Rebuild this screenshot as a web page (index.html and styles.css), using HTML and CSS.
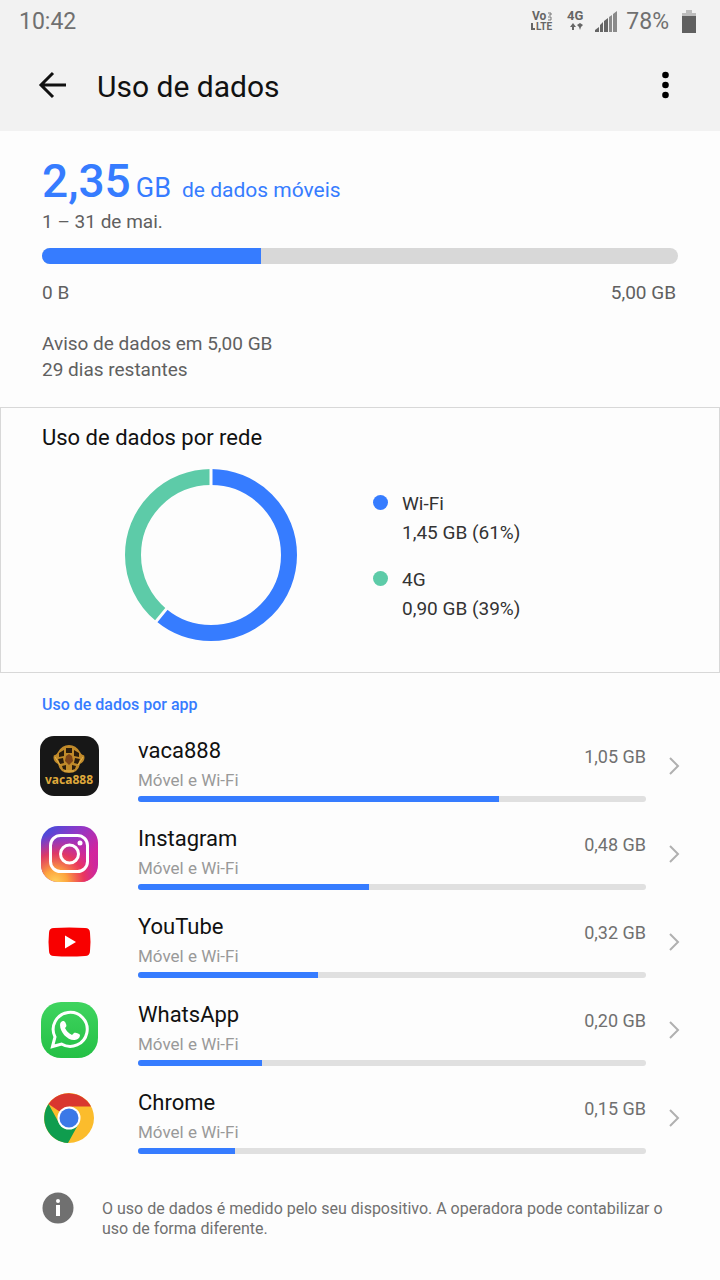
FILE: index.html
```html
<!DOCTYPE html>
<html lang="pt-BR">
<head>
  <meta charset="UTF-8" />
  <meta name="viewport" content="width=device-width, initial-scale=1.0"/>
  <title>Uso de dados</title>
  <link rel="stylesheet" href="styles.css">
</head>
<body>

  <header>
    <div class="status-bar">
      <span class="clock">10:42</span>
      <div class="status-icons">
        <svg class="volte" width="24" height="22" viewBox="0 0 24 22">
          <text x="2" y="10" font-size="12">Vo</text>
          <path d="M18 3h3v2h-2M18 7h3v3h-3" fill="none" stroke="#777" />
          <text x="6" y="20" font-size="10">LTE</text>
          <path d="M2 13v6h3" fill="none" stroke="#666" stroke-width="2" />
        </svg>
        <svg class="net" width="20" height="22" viewBox="0 0 20 22">
          <text x="1" y="10" font-size="13">4G</text>
          <path d="M4 17l3-4 3 4H8v3H6v-3zM14 20l-1-3-2-2 3-2 3 2-2 2z" />
        </svg>
        <svg class="signal" width="22" height="21" viewBox="0 0 22 21">
          <path d="M0 21v-2l4-3v5zM5 21v-7l3-3v10zM9 21V10l4-3v14z" fill="#666" />
          <path d="M14 21V6l3-2v17zM18 21V3l4-3v21z" fill="#8a8a8a" />
        </svg>
        <span class="battery-level">78%</span>
        <svg class="battery" width="16" height="23" viewBox="0 0 16 23">
          <path d="M1 3h4V0h6v3h4v4H1z" fill="#bdbdbd" />
          <path d="M1 6h14v17H1z" fill="#606060" />
        </svg>
      </div>
    </div>

    <div class="title-bar">
      <button class="icon-btn" aria-label="Voltar">
        <svg width="28" height="28" viewBox="0 0 28 28">
          <path d="M14 2L2 14l12 12M2 14h25" fill="none" stroke="#111" stroke-width="3" />
        </svg>
      </button>
      <h1>Uso de dados</h1>
      <button class="icon-btn" aria-label="Mais opções">
        <svg width="8" height="28" viewBox="0 0 8 28">
          <circle cx="3.500" cy="4" r="3.300" />
          <circle cx="3.500" cy="14" r="3.300" />
          <circle cx="3.500" cy="24" r="3.300" />
        </svg>
      </button>
    </div>
  </header>

  <main>
    <section class="usage">
      <div class="total">
        <span class="amount">2,35</span>
        <span class="unit">GB</span>
        <span class="kind">de dados móveis</span>
      </div>
      <p class="period">1 – 31 de mai.</p>
      <div class="total-bar"><div class="fill" style="width: 34.4%"></div></div>
      <div class="range">
        <span>0 B</span>
        <span>5,00 GB</span>
      </div>
      <p class="warning">Aviso de dados em 5,00 GB<br>29 dias restantes</p>
    </section>

    <section class="network">
      <h2>Uso de dados por rede</h2>
      <div class="network-body">
        <svg class="donut" width="172" height="172" viewBox="0 0 172 172">
          <g fill="none" stroke-width="16" transform="rotate(-90 86 86)">
            <circle cx="86" cy="86" r="78" pathLength="100" stroke="#367cff" stroke-dasharray="61 100" />
            <circle cx="86" cy="86" r="78" pathLength="100" stroke="#5dcba8" stroke-dasharray="39 100" stroke-dashoffset="-61" />
          </g>
          <path d="M86 0v20M43.500 137.400L30 153.800" stroke="#fdfdfd" stroke-width="3" />
        </svg>
        <ul class="legend">
          <li class="wifi">Wi-Fi<br>1,45 GB (61%)</li>
          <li class="mobile">4G<br>0,90 GB (39%)</li>
        </ul>
      </div>
    </section>

    <section class="apps">
      <h2>Uso de dados por app</h2>
      <ul>
        <li>
          <a class="app" href="#vaca888">
            <svg class="app-icon" viewBox="0 0 58 58">
              <rect y="-1" width="59" height="60" rx="14" fill="#171717" />
              <path d="M14 18q2 1 4-3 4-7 11-7t11 7q2 4 4 3 2 6-4 9-2 9-11 9t-11-9q-6-3-4-9z" fill="#c08a2a" />
              <g fill="#2a1c0c">
                <path d="M26 11h6v5h-6zM19 16l5-3v6l-5 1zM39 16l-5-3v6l5 1zM18 22l5-1 1 5-4 1zM40 22l-5-1-1 5 4 1zM22 29l4-1v5l-3-1zM36 29l-4-1v5l3-1z" />
              </g>
              <path d="M26 19l3-2 3 2 1 5-4 4-4-4z" fill="#7d4317" />
              <path d="M15 20l5 8M43 20l-5 8M24 34h10" fill="none" stroke="#e5b64c" />
              <text class="vaca-text" x="29" y="47" text-anchor="middle">vaca888</text>
            </svg>
            <div class="app-info">
              <div class="app-head">
                <div>
                  <h3>vaca888</h3>
                  <p>Móvel e Wi-Fi</p>
                </div>
                <span class="app-value">1,05 GB</span>
              </div>
              <div class="app-bar"><div class="fill" style="width: 71%"></div></div>
            </div>
            <svg class="chevron" width="12" height="20" viewBox="0 0 12 20"><path d="M2 2l8 8-8 8" /></svg>
          </a>
        </li>
        <li>
          <a class="app" href="#instagram">
            <svg class="app-icon" viewBox="0 0 58 58">
              <defs>
                <linearGradient id="ig-base" x1="0" y1="0" x2="1" y2="1">
                  <stop offset="0" stop-color="#3551df" />
                  <stop offset=".35" stop-color="#8d38c8" />
                  <stop offset=".7" stop-color="#d3249d" />
                  <stop offset="1" stop-color="#c224a8" />
                </linearGradient>
                <radialGradient id="ig-warm" cx=".25" cy="1" r=".85">
                  <stop offset="0" stop-color="#ffd15c" />
                  <stop offset=".25" stop-color="#fda43f" />
                  <stop offset=".6" stop-color="#f13a4d" stop-opacity=".8" />
                  <stop offset="1" stop-color="#d42a9a" stop-opacity="0" />
                </radialGradient>
              </defs>
              <rect x="1" y="1" width="57" height="56" rx="17" fill="url(#ig-base)" />
              <rect x="1" y="1" width="57" height="56" rx="17" fill="url(#ig-warm)" />
              <g fill="none" stroke="#fff" stroke-width="3">
                <rect x="10.500" y="10.500" width="37" height="36" rx="10" />
                <circle cx="29.500" cy="29" r="9" />
              </g>
              <circle cx="40" cy="18" r="2.500" fill="#fff" />
            </svg>
            <div class="app-info">
              <div class="app-head">
                <div>
                  <h3>Instagram</h3>
                  <p>Móvel e Wi-Fi</p>
                </div>
                <span class="app-value">0,48 GB</span>
              </div>
              <div class="app-bar"><div class="fill" style="width: 45.4%"></div></div>
            </div>
            <svg class="chevron" width="12" height="20" viewBox="0 0 12 20"><path d="M2 2l8 8-8 8" /></svg>
          </a>
        </li>
        <li>
          <a class="app" href="#youtube">
            <svg class="app-icon" viewBox="0 0 58 58">
              <path d="M14 15q15-1 31 0 5 0 5 5 1 9 0 18 0 5-5 5-16 1-31 0-5 0-5-5-1-9 0-18 0-5 5-5z" fill="#f80000" />
              <path d="M25 22.500v13l11-6.500z" fill="#fff" />
            </svg>
            <div class="app-info">
              <div class="app-head">
                <div>
                  <h3>YouTube</h3>
                  <p>Móvel e Wi-Fi</p>
                </div>
                <span class="app-value">0,32 GB</span>
              </div>
              <div class="app-bar"><div class="fill" style="width: 35.4%"></div></div>
            </div>
            <svg class="chevron" width="12" height="20" viewBox="0 0 12 20"><path d="M2 2l8 8-8 8" /></svg>
          </a>
        </li>
        <li>
          <a class="app" href="#whatsapp">
            <svg class="app-icon" viewBox="0 0 58 58">
              <defs>
                <linearGradient id="wa" x1="0" y1="0" x2="0" y2="1">
                  <stop offset="0" stop-color="#3fd45f" />
                  <stop offset="1" stop-color="#24c045" />
                </linearGradient>
              </defs>
              <rect x="1" y="1" width="57" height="56" rx="20" fill="url(#wa)" />
              <path d="M12.500 45.500l2.500-9.500a17 17 0 1 1 6.500 7z" fill="none" stroke="#fff" stroke-width="3" />
              <path d="M20 24c0-3 2-4 3-4s2 0 3 3c1 2 0 3-1 4 2 4 4 5 7 7l2-2c1-1 6 1 6 2 0 4-4 5-6 5-7 0-14-8-14-15z" fill="#fff" />
            </svg>
            <div class="app-info">
              <div class="app-head">
                <div>
                  <h3>WhatsApp</h3>
                  <p>Móvel e Wi-Fi</p>
                </div>
                <span class="app-value">0,20 GB</span>
              </div>
              <div class="app-bar"><div class="fill" style="width: 24.5%"></div></div>
            </div>
            <svg class="chevron" width="12" height="20" viewBox="0 0 12 20"><path d="M2 2l8 8-8 8" /></svg>
          </a>
        </li>
        <li>
          <a class="app" href="#chrome">
            <svg class="app-icon" viewBox="0 0 58 58">
              <circle cx="29" cy="29" r="25" fill="#fbbc2c" />
              <path d="M29 29L8.500 15a25 25 0 0 1 42.500 2.500H29z" fill="#d9372f" />
              <path d="M29 29l-10 5L8.500 15A25 25 0 0 0 28 54l10.500-19z" fill="#0f9d4e" />
              <circle cx="29" cy="29" r="11.500" fill="#fff" />
              <circle cx="29" cy="29" r="9.500" fill="#3b78e7" />
            </svg>
            <div class="app-info">
              <div class="app-head">
                <div>
                  <h3>Chrome</h3>
                  <p>Móvel e Wi-Fi</p>
                </div>
                <span class="app-value">0,15 GB</span>
              </div>
              <div class="app-bar"><div class="fill" style="width: 19.1%"></div></div>
            </div>
            <svg class="chevron" width="12" height="20" viewBox="0 0 12 20"><path d="M2 2l8 8-8 8" /></svg>
          </a>
        </li>
      </ul>
    </section>
  </main>

  <footer>
    <svg class="info-icon" width="32" height="32" viewBox="0 0 32 32">
      <circle cx="16" cy="16" r="15.500" fill="#707070" />
      <circle cx="16" cy="9" r="2" fill="#fff" />
      <path d="M14 13h4v11h-4z" fill="#fff" />
    </svg>
    <p>O uso de dados é medido pelo seu dispositivo. A operadora pode contabilizar o uso de forma diferente.</p>
  </footer>

</body>
</html>
```
FILE: styles.css
```css
* {
  box-sizing: border-box;
}

body {
  margin: 0;
  font-family: Roboto, sans-serif;
  background-color: #fdfdfd;
  color: #111;
}

h1, h2, h3, p, ul {
  margin: 0;
  padding: 0;
  font-weight: 400;
}

ul {
  list-style: none;
}

svg {
  display: block;
  flex-shrink: 0;
  overflow: visible;
}

/* Cabeçalho */
header {
  background-color: #f2f2f2;
}

.status-bar {
  display: flex;
  justify-content: space-between;
  align-items: center;
  height: 42px;
  padding: 0 23px 0 19px;
  font-size: 23px;
  color: #707070;
}

.status-icons {
  display: flex;
  align-items: center;
}

.volte, .net {
  fill: #666;
  font-weight: 700;
}

.volte, .battery-level {
  margin-right: 12px;
}

.net, .signal {
  margin-right: 9px;
}

.title-bar {
  display: flex;
  align-items: center;
  height: 89px;
  padding: 0 50px 0 39px;
}

.title-bar h1 {
  flex: 1;
  margin-left: 30px;
  font-size: 30px;
}

.icon-btn {
  padding: 0 0 3px;
  background: none;
  border: none;
  cursor: pointer;
}

/* Uso total */
.usage {
  padding: 25px 42px 24px;
  font-size: 19px;
  color: #606060;
}

.total {
  display: flex;
  align-items: baseline;
  line-height: 24px;
  color: #367cff;
}

.amount {
  font-size: 46px;
  font-weight: 500;
  line-height: 50px;
}

.unit {
  margin: 0 11px 0 5px;
  font-size: 27px;
}

.kind {
  font-size: 21px;
}

.period {
  margin-top: 3px;
  line-height: 26px;
}

.total-bar {
  height: 16px;
  margin: 13px 0 16px;
  background-color: #d8d8d8;
  border-radius: 8px;
  overflow: hidden;
}

.fill {
  height: 100%;
  background-color: #367cff;
}

.range {
  display: flex;
  justify-content: space-between;
  padding-right: 2px;
  line-height: 26px;
}

.warning {
  margin-top: 25px;
  line-height: 26px;
}

/* Uso por rede */
.network {
  padding: 18px 0 31px;
  border: 1px solid #d8d8d8;
}

.network h2 {
  padding: 0 41px;
  font-size: 22px;
  line-height: 24px;
}

.network-body {
  display: grid;
  grid-template-columns: 1fr 1fr;
  align-items: center;
  margin-top: 19px;
  padding: 0 24px 0 48px;
}

.donut {
  justify-self: center;
}

.legend {
  display: grid;
  gap: 18px;
  padding-top: 1px;
  font-size: 19px;
  line-height: 29px;
  color: #333;
}

.legend li {
  position: relative;
  padding-left: 30px;
}

.legend li::before {
  content: "";
  position: absolute;
  top: 6px;
  left: 1px;
  width: 15px;
  height: 15px;
  border-radius: 50%;
  background-color: #367cff;
}

.legend .mobile::before {
  background-color: #5dcba8;
}

/* Uso por app */
.apps {
  padding: 20px 40px 0;
}

.apps h2 {
  margin-bottom: 5px;
  padding-left: 2px;
  font-size: 16px;
  font-weight: 500;
  line-height: 24px;
  color: #367cff;
}

.app {
  display: flex;
  align-items: center;
  padding: 8px 0;
  color: inherit;
  text-decoration: none;
}

.app-icon {
  width: 58px;
  height: 58px;
}

.vaca-text {
  font-family: "Noto Sans", sans-serif;
  font-size: 12px;
  font-weight: 700;
  fill: #dfa83b;
}

.app-info {
  flex: 1;
  margin: 9px 22px 0 40px;
}

.app-head {
  display: flex;
  justify-content: space-between;
}

.app h3 {
  font-size: 22px;
  line-height: 24px;
}

.app p {
  margin-top: 5px;
  font-size: 17px;
  line-height: 24px;
  color: #999;
}

.app-value {
  font-size: 18px;
  line-height: 36px;
  color: #707070;
}

.app-bar {
  height: 6px;
  margin-top: 4px;
  background-color: #e0e0e0;
  border-radius: 3px;
  overflow: hidden;
}

.chevron {
  fill: none;
  stroke: #b0b0b0;
  stroke-width: 2;
}

/* Rodapé */
footer {
  display: flex;
  padding: 30px 42px 30px;
}

footer p {
  margin: 7px 0 0 28px;
  font-size: 16px;
  line-height: 20px;
  color: #707070;
}
```
